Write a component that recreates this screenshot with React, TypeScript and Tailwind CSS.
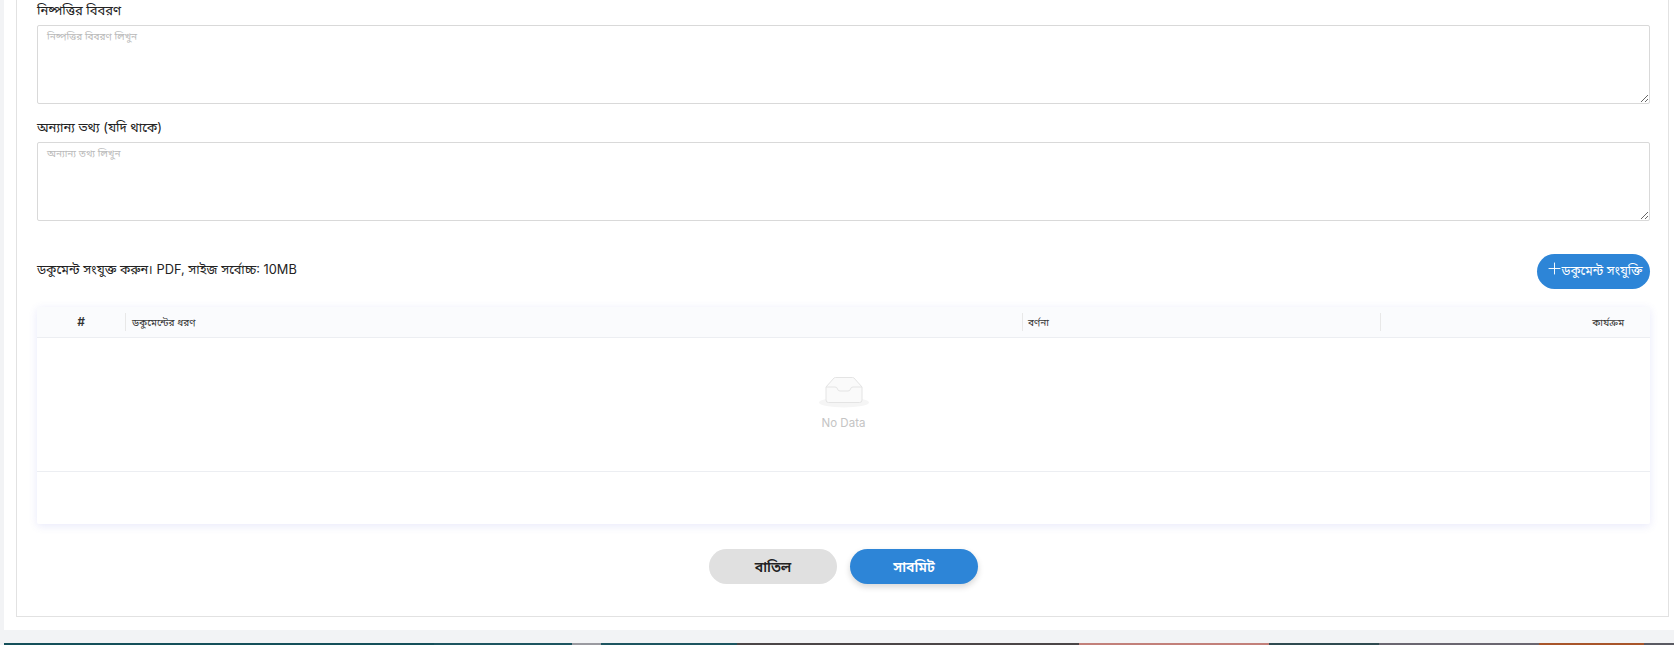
import { Plus } from 'lucide-react';

const pageFont = 'Inter, "Noto Sans", "Noto Sans Bengali", sans-serif';

const stripColors = [
  'bg-[#14505a] w-[430px]',
  'bg-[#1d5560] w-[138px]',
  'bg-[#9a9aa0] w-[29px]',
  'bg-[#1d5560] w-[136px]',
  'bg-[#4b4647] w-[342px]',
  'bg-[#c2807a] w-[190px]',
  'bg-[#2f4a50] w-[110px]',
  'bg-[#6a6670] w-[160px]',
  'bg-[#a8552a] w-[105px]',
  'bg-[#5a5a62] flex-1',
];

function Field({ label, placeholder }: { label: string; placeholder: string }) {
  return (
    <div>
      <label className="block text-[13px] leading-[20px] text-[#222]">{label}</label>
      <textarea
        placeholder={placeholder}
        className="mt-[5px] block h-[79px] w-full rounded-[2px] border border-[#d9d9d9] px-[9px] py-[2px] text-[10px] leading-[16px] placeholder:text-[#b9b9b9]"
      />
    </div>
  );
}

function EmptyBox() {
  return (
    <svg width="50" height="33" viewBox="0 0 50 33" fill="none">
      <ellipse cx="25" cy="27.5" rx="25" ry="5" fill="#f5f5f5" />
      <path
        d="M7 12 L15 3 Q15.5 2.5 16.5 2.5 L33.5 2.5 Q34.5 2.5 35 3 L43 12 L43 25 Q43 27.5 40.5 27.5 L9.5 27.5 Q7 27.5 7 25 Z"
        fill="#fafafa"
        stroke="#e4e4e4"
      />
      <path
        d="M7 12 L16 12 Q18 12 18.5 14 Q19 16 21 16 L29 16 Q31 16 31.5 14 Q32 12 34 12 L43 12"
        stroke="#e4e4e4"
        fill="#fafafa"
      />
    </svg>
  );
}

export default function App() {
  return (
    <div className="flex h-[645px] flex-col overflow-hidden bg-[#f2f3f5] pl-[4px]" style={{ fontFamily: pageFont }}>
      <div className="h-[630px] bg-white pl-[12px] pr-[5px]">
        <div className="h-[617px] border-x border-b border-[#e2e2e2] pl-[20px] pr-[18px]">
          <div className="flex flex-col gap-[13px]">
            <Field label="নিষ্পত্তির বিবরণ" placeholder="নিষ্পত্তির বিবরণ লিখুন" />
            <Field label="অন্যান্য তথ্য (যদি থাকে)" placeholder="অন্যান্য তথ্য লিখুন" />
          </div>

          <div className="mt-[33px] flex h-[35px] items-center justify-between">
            <p className="mb-[3px] text-[12.8px] text-[#222]">ডকুমেন্ট সংযুক্ত করুন। PDF, সাইজ সর্বোচ্চ: 10MB</p>
            <button className="flex h-[35px] w-[113px] items-center justify-center rounded-full bg-[#2d85d7] text-[12.5px] text-white">
              <Plus size={19} strokeWidth={1.2} className="mb-[6px] -mr-[2px] shrink-0" />
              ডকুমেন্ট সংযুক্তি
            </button>
          </div>

          <div className="mt-[18px] rounded-[2px] bg-white shadow-[0_2px_8px_rgba(90,100,220,0.14)]">
            <div className="flex h-[31px] items-center border-b border-[#eceef2] bg-[#fafbfd] text-[10px] text-[#333]">
              <div className="w-[88px] text-center text-[12px] font-semibold">#</div>
              <div className="h-[18px] w-[897px] border-l border-[#e8e8e8] pl-[6px] leading-[18px]">ডকুমেন্টের ধরণ</div>
              <div className="h-[18px] w-[358px] border-l border-[#e8e8e8] pl-[5px] leading-[18px]">বর্ণনা</div>
              <div className="h-[18px] flex-1 border-l border-[#e8e8e8] pr-[26px] text-right leading-[18px]">কার্যক্রম</div>
            </div>
            <div className="flex h-[134px] flex-col items-center justify-center border-b border-[#eceef2] pb-[1px]">
              <EmptyBox />
              <span className="mt-[7px] text-[11.5px] text-[#c4c4c4]">No Data</span>
            </div>
            <div className="h-[52px]" />
          </div>

          <div className="mt-[25px] flex justify-center gap-[13px]">
            <button className="h-[35px] w-[128px] rounded-full bg-[#e0e0e0] text-[14px] font-semibold text-[#222]">বাতিল</button>
            <button className="h-[35px] w-[128px] rounded-full bg-[#2d85d7] text-[14px] font-semibold text-white shadow-[0_3px_6px_rgba(0,0,0,0.16)]">সাবমিট</button>
          </div>
        </div>
      </div>
      <div className="mt-[13px] flex h-[2px]">
        {stripColors.map((c, i) => (
          <div key={i} className={c} />
        ))}
      </div>
    </div>
  );
}
